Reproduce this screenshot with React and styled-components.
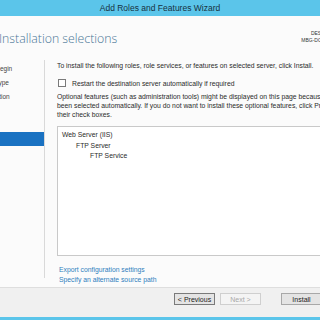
import styled, { createGlobalStyle } from "styled-components";

const Global = createGlobalStyle`
  html, body {
    margin: 0;
    padding: 0;
    width: 320px;
    height: 320px;
    overflow: hidden;
    background: #fbfbfb;
  }
`;

const Window = styled.div`
  margin-left: -48px;
  width: 416px;
  height: 320px;
  display: flex;
  flex-direction: column;
  overflow: hidden;
  font-family: "Liberation Sans", Arial, sans-serif;
  color: #2b2b2b;
  background: #fbfbfb;
`;

const TitleBar = styled.div`
  height: 16px;
  flex-shrink: 0;
  background: #5bc5ea;
  display: flex;
  align-items: center;
  justify-content: center;
  font-size: 8.5px;
  color: #17323f;
`;

const Header = styled.div`
  height: 44px;
  flex-shrink: 0;
  display: flex;
  justify-content: space-between;
  padding: 0 2px 0 47px;
`;

const Heading = styled.h1`
  margin: 0;
  align-self: center;
  font-family: "Open Sans", "Liberation Sans", sans-serif;
  font-weight: 300;
  font-size: 12.3px;
  color: #4a7696;
`;

const ServerInfo = styled.div`
  margin-top: 14px;
  text-align: right;
  font-size: 5px;
  line-height: 7px;
  color: #333;
`;

const Body = styled.div`
  flex: 1;
  display: flex;
  min-height: 0;
`;

const Nav = styled.div`
  width: 92px;
  flex-shrink: 0;
  border-right: 1px solid #d9d9d9;
  margin-bottom: 9px;
  padding-top: 2px;
  overflow: hidden;
`;

const NavItem = styled.div`
  height: 14px;
  line-height: 14px;
  padding-left: 10px;
  font-size: 6.5px;
  white-space: nowrap;
  color: ${(p) => (p.$active ? "#fff" : p.$disabled ? "#9a9a9a" : "#444")};
  background: ${(p) => (p.$active ? "#1a72c2" : "transparent")};
`;

const Content = styled.div`
  flex: 1;
  padding: 1px 20px 0 12px;
  font-size: 6.8px;
  line-height: 9px;
  white-space: nowrap;
  overflow: hidden;
`;

const Para = styled.div`
  margin-top: ${(p) => p.$mt || 0}px;
`;

const CheckRow = styled.label`
  margin-top: 8px;
  height: 10px;
  display: flex;
  align-items: center;
  gap: 6px;
  padding-left: 1px;
`;

const Box = styled.span`
  width: 6px;
  height: 6px;
  border: 1px solid #7a7a7a;
  background: #fff;
`;

const TreeBox = styled.div`
  margin-top: 7px;
  height: 125px;
  border: 1px solid #c9c9c9;
  background: #fff;
  padding: 3px 0 0 4px;
  line-height: 10.5px;
`;

const TreeItem = styled.div`
  padding-left: ${(p) => p.$level * 14}px;
`;

const Links = styled.div`
  margin-top: 9px;
  padding-left: 2px;
  line-height: 9.5px;
`;

const Link = styled.div`
  color: #2f80bd;
`;

const Footer = styled.div`
  height: 24px;
  flex-shrink: 0;
  border-top: 1px solid #dedede;
  background: #f0f0f0;
  display: flex;
  align-items: flex-start;
  padding: 5px 0 0 222px;
  gap: 5px;
`;

const Button = styled.button`
  width: 42px;
  height: 12px;
  padding: 0;
  margin-left: ${(p) => p.$gap || 0}px;
  font-family: "Liberation Sans", Arial, sans-serif;
  font-size: 7px;
  border: 1px solid ${(p) => (p.$default ? "#7a7a7a" : p.disabled ? "#cfcfcf" : "#a8a8a8")};
  background: ${(p) => (p.disabled ? "#f4f4f4" : "#e4e4e4")};
  color: ${(p) => (p.disabled ? "#a8a8a8" : "#222")};
`;

const BottomBar = styled.div`
  height: 3px;
  flex-shrink: 0;
  background: #5bc5ea;
`;

const steps = [
  { label: "Before You Begin" },
  { label: "Installation Type" },
  { label: "Server Selection" },
  { label: "Server Roles" },
  { label: "Features" },
  { label: "Confirmation", active: true },
  { label: "Results", disabled: true },
];

export default function App() {
  return (
    <>
      <Global />
      <Window>
        <TitleBar>Add Roles and Features Wizard</TitleBar>
        <Header>
          <Heading>Installation selections</Heading>
          <ServerInfo>
            <div>DESTINATION SERVER</div>
            <div>MBG-DC01.mbgtest.lab.local</div>
          </ServerInfo>
        </Header>
        <Body>
          <Nav>
            {steps.map((s) => (
              <NavItem key={s.label} $active={s.active} $disabled={s.disabled}>
                {s.label}
              </NavItem>
            ))}
          </Nav>
          <Content>
            <Para>
              To install the following roles, role services, or features on selected server, click Install.
            </Para>
            <CheckRow>
              <Box />
              Restart the destination server automatically if required
            </CheckRow>
            <Para $mt={4}>
              Optional features (such as administration tools) might be displayed on this page because they have
              <br />
              been selected automatically. If you do not want to install these optional features, click Previous to clear
              <br />
              their check boxes.
            </Para>
            <TreeBox>
              <TreeItem $level={0}>Web Server (IIS)</TreeItem>
              <TreeItem $level={1}>FTP Server</TreeItem>
              <TreeItem $level={2}>FTP Service</TreeItem>
            </TreeBox>
            <Links>
              <Link>Export configuration settings</Link>
              <Link>Specify an alternate source path</Link>
            </Links>
          </Content>
        </Body>
        <Footer>
          <Button $default>&lt; Previous</Button>
          <Button disabled>Next &gt;</Button>
          <Button $gap={15}>Install</Button>
          <Button>Cancel</Button>
        </Footer>
        <BottomBar />
      </Window>
    </>
  );
}
